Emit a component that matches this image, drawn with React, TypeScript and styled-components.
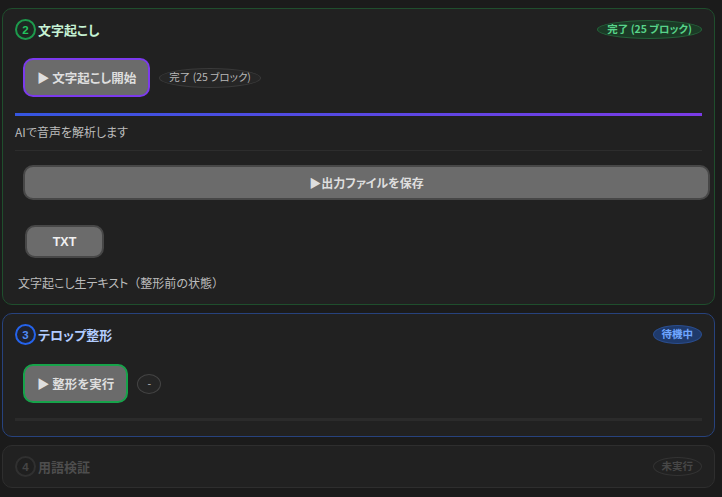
import React from "react";
import styled, { createGlobalStyle, css } from "styled-components";

const Global = createGlobalStyle`
  html, body { margin: 0; padding: 0; background: #1b1b1b; }
  body {
    font-family: "Noto Sans CJK JP", "Noto Sans", sans-serif;
    font-feature-settings: "palt";
    color: #bdbdbd;
  }
  * { box-sizing: border-box; }
`;

type Tone = "green" | "blue" | "gray";

const toneBorder: Record<Tone, string> = {
  green: "#1f4e2d",
  blue: "#27427d",
  gray: "#2e2e2e",
};

const Page = styled.div`
  display: flex;
  flex-direction: column;
  gap: 8px;
  padding: 8px 7px 8px 2px;
`;

const Card = styled.section<{ $tone: Tone }>`
  background: #212121;
  border: 1px solid ${(p) => toneBorder[p.$tone]};
  border-radius: 10px;
  padding: 10px 12px 10px 12px;
  display: flex;
  flex-direction: column;
`;

const Header = styled.div`
  display: flex;
  align-items: center;
  height: 21px;
`;

const numTone: Record<Tone, ReturnType<typeof css>> = {
  green: css`
    border-color: #1d9a4c;
    color: #22c55e;
    background: #1e2822;
  `,
  blue: css`
    border-color: #2563eb;
    color: #4f8bf5;
    background: #1e2230;
  `,
  gray: css`
    border-color: #303030;
    color: #454545;
    background: #1f1f1f;
  `,
};

const StepNum = styled.span<{ $tone: Tone }>`
  width: 21px;
  height: 21px;
  border-radius: 50%;
  border: 2px solid;
  display: flex;
  align-items: center;
  justify-content: center;
  font-size: 11.5px;
  font-weight: 700;
  font-family: "Liberation Sans", "Noto Sans", sans-serif;
  ${(p) => numTone[p.$tone]}
`;

const titleColor: Record<Tone, string> = {
  green: "#c6f2d4",
  blue: "#b2ccff",
  gray: "#4e4e4e",
};

const Title = styled.h2<{ $tone: Tone }>`
  margin: 0 0 0 2px;
  font-size: 13px;
  font-weight: 700;
  color: ${(p) => titleColor[p.$tone]};
  flex: 1;
  line-height: 21px;
`;

type BadgeKind = "done" | "idle" | "waiting" | "off" | "dash";

const badgeStyles: Record<BadgeKind, ReturnType<typeof css>> = {
  done: css`
    background: #1b3a26;
    border: 1px solid #24633a;
    color: #58d48a;
    font-weight: 700;
    height: 19px;
    padding: 0 9px;
  `,
  idle: css`
    background: #262626;
    border: 1px solid #3a3a3a;
    color: #b8b8b8;
    height: 20px;
    padding: 0 9px;
  `,
  waiting: css`
    background: #1f3a6b;
    border: 1px solid #2a4d8e;
    color: #6fa6ff;
    font-weight: 700;
    height: 19px;
    padding: 0 8px;
  `,
  off: css`
    background: transparent;
    border: 1px solid #333;
    color: #474747;
    font-weight: 700;
    height: 19px;
    padding: 0 8px;
  `,
  dash: css`
    background: #252525;
    border: 1px solid #444;
    color: #bbb;
    height: 20px;
    width: 24px;
    justify-content: center;
  `,
};

const Badge = styled.span<{ $kind: BadgeKind }>`
  display: inline-flex;
  align-items: center;
  border-radius: 50%;
  font-size: 10.5px;
  white-space: nowrap;
  line-height: 1;
  ${(p) => badgeStyles[p.$kind]}
`;

const ActionRow = styled.div<{ $top: number }>`
  display: flex;
  align-items: center;
  gap: 9px;
  margin: ${(p) => p.$top}px 0 0 8px;
`;

const btnBorder: Record<"purple" | "green" | "plain", string> = {
  purple: "#7c3aed",
  green: "#16a34a",
  plain: "#474747",
};

const ActionButton = styled.button<{ $accent: "purple" | "green" }>`
  height: 39px;
  padding: 0 12px;
  background: #6b6b6b;
  border: 2px solid ${(p) => btnBorder[p.$accent]};
  border-radius: 10px;
  color: #dedede;
  font-family: inherit;
  font-feature-settings: "palt";
  font-size: 12.5px;
  font-weight: 700;
  cursor: pointer;
`;

const Progress = styled.div<{ $filled: boolean }>`
  height: 3px;
  margin-top: ${(p) => (p.$filled ? 16 : 15)}px;
  background: ${(p) =>
    p.$filled ? "linear-gradient(90deg, #3556e0, #7b3be6)" : "#2b2b2b"};
`;

const Note = styled.p<{ $top: number; $left?: number }>`
  margin: ${(p) => p.$top}px 0 0 ${(p) => p.$left ?? 0}px;
  font-size: 12px;
  line-height: 15px;
  color: #bcbcbc;
`;

const Wide = styled.span`
  font-feature-settings: normal;
`;

const Divider = styled.hr`
  margin: 11px 0 0;
  border: none;
  height: 1px;
  background: #2d2d2d;
`;

const WideButton = styled.button`
  margin: 14px 0 0 8px;
  width: 100%;
  height: 35px;
  background: #6b6b6b;
  border: 2px solid ${btnBorder.plain};
  border-radius: 10px;
  color: #dedede;
  font-family: inherit;
  font-feature-settings: "palt";
  font-size: 12px;
  font-weight: 700;
  cursor: pointer;
`;

const FormatButton = styled.button`
  margin: 25px 0 0 10px;
  width: 79px;
  height: 33px;
  background: #6b6b6b;
  border: 2px solid ${btnBorder.plain};
  border-radius: 10px;
  color: #f0f0f0;
  font-family: "Liberation Sans", "Noto Sans", sans-serif;
  font-size: 12.5px;
  font-weight: 700;
  cursor: pointer;
`;

const Spacer = styled.div<{ $h: number }>`
  height: ${(p) => p.$h}px;
`;

export default function App() {
  return (
    <>
      <Global />
      <Page>
        <Card $tone="green">
          <Header>
            <StepNum $tone="green">2</StepNum>
            <Title $tone="green">文字起こし</Title>
            <Badge $kind="done">完了 (25 ブロック)</Badge>
          </Header>
          <ActionRow $top={18}>
            <ActionButton $accent="purple">▶ 文字起こし開始</ActionButton>
            <Badge $kind="idle">完了 (25 ブロック)</Badge>
          </ActionRow>
          <Progress $filled />
          <Note $top={8}>AIで音声を解析します</Note>
          <Divider />
          <WideButton>▶出力ファイルを保存</WideButton>
          <FormatButton>TXT</FormatButton>
          <Note $top={17} $left={3}>
            文字起こし生テキスト<Wide>（</Wide>整形前の状態<Wide>）</Wide>
          </Note>
          <Spacer $h={4} />
        </Card>

        <Card $tone="blue">
          <Header>
            <StepNum $tone="blue">3</StepNum>
            <Title $tone="blue">テロップ整形</Title>
            <Badge $kind="waiting">待機中</Badge>
          </Header>
          <ActionRow $top={19}>
            <ActionButton $accent="green">▶ 整形を実行</ActionButton>
            <Badge $kind="dash">-</Badge>
          </ActionRow>
          <Progress $filled={false} />
          <Spacer $h={5} />
        </Card>

        <Card $tone="gray">
          <Header>
            <StepNum $tone="gray">4</StepNum>
            <Title $tone="gray">用語検証</Title>
            <Badge $kind="off">未実行</Badge>
          </Header>
        </Card>
      </Page>
    </>
  );
}
